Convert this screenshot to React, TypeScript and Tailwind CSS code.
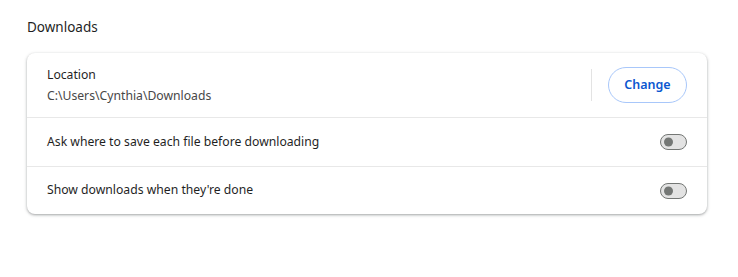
import { useState } from "react";

function Toggle({ on, onChange }: { on: boolean; onChange: () => void }) {
  return (
    <button
      onClick={onChange}
      className={`relative h-[16px] w-[27px] rounded-full border-[1.5px] ${
        on ? "border-[#0b57d0] bg-[#0b57d0]" : "border-[#747775] bg-[#e3e3e3]"
      }`}
    >
      <span
        className={`absolute top-1/2 h-[9px] w-[9px] -translate-y-1/2 rounded-full ${
          on ? "right-[2px] bg-white" : "left-[3px] bg-[#747775]"
        }`}
      />
    </button>
  );
}

export default function App() {
  const [ask, setAsk] = useState(false);
  const [show, setShow] = useState(false);

  return (
    <div className="min-h-screen bg-white pl-[27px] pr-[31px] pt-[17px] font-['Segoe_UI','Noto_Sans',sans-serif] text-[12.2px] text-[#1f1f1f]">
      <h2 className="text-[13.5px] leading-[20px] font-normal">Downloads</h2>

      <div className="mt-[16px] rounded-[8px] bg-white shadow-[0_1px_2px_0_rgba(60,64,67,0.3),0_1px_3px_1px_rgba(60,64,67,0.15)]">
        {/* Location */}
        <div className="flex h-[64px] items-center px-[20px]">
          <div className="flex-1 leading-[20px]">
            <div>Location</div>
            <div className="mt-[1px] text-[#474747]">C:\Users\Cynthia\Downloads</div>
          </div>
          <div className="mx-[16px] h-[32px] w-px bg-[#e3e3e3]" />
          <button className="h-[36px] w-[79px] rounded-full border border-[#a8c7fa] text-[12.5px] font-semibold text-[#0b57d0]">
            Change
          </button>
        </div>

        <div className="flex h-[49px] items-center border-t border-[#e8e8e8] px-[20px]">
          <span className="flex-1">Ask where to save each file before downloading</span>
          <Toggle on={ask} onChange={() => setAsk(!ask)} />
        </div>

        <div className="flex h-[48px] items-center border-t border-[#e8e8e8] px-[20px]">
          <span className="flex-1">Show downloads when they're done</span>
          <Toggle on={show} onChange={() => setShow(!show)} />
        </div>
      </div>
    </div>
  );
}
